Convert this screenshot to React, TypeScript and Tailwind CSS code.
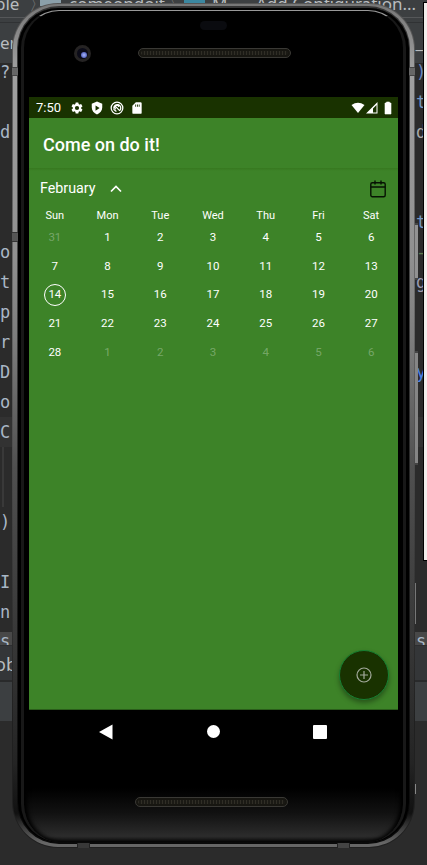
import type { ReactNode } from "react";

const weekdays = ["Sun", "Mon", "Tue", "Wed", "Thu", "Fri", "Sat"];
const days = [31, ...Array.from({ length: 28 }, (_, i) => i + 1), 1, 2, 3, 4, 5, 6];

const leftCode = ["?", "", "d", "", "", "", "o", "t", "p", "r", "D", "o", "C", "", "", ")", "", "I", "n"];
const rightCode: [string, string][] = [
  [")", "text-[#6a87c0]"], ["t", "text-[#7397c0]"], ["d", "text-[#a9a9a9]"], ["", ""], ["", ""],
  ["t", "text-[#7397c0]"], ["-", "text-[#5d7a50]"], ["g", "text-[#9a9ab0]"], ["", ""], ["", ""],
  ["y", "text-[#4a82e8]"],
];

function Editor() {
  return (
    <div className="flex h-[865px] w-[427px] flex-col overflow-hidden bg-[#2b2b2b] text-[#a9b7c6]">
      <div className="flex h-[18px] shrink-0 items-start border-b border-[#555759] bg-[#3c3f41] font-['Noto_Sans',sans-serif] text-[17px] leading-[7px] whitespace-pre text-[#b8bcbf]">
        <span className="w-[22px]"><span className="-ml-[5px]">ble</span></span>
        <span className="w-[18px] pl-[7px] text-[#777]">〉</span>
        <span className="h-[6px] w-[21px] bg-[#8b9fa9]" />
        <span className="w-[104px] pl-[8px]">comeondoit</span>
        <span className="w-[19px] pl-[3px] text-[#777]">〉</span>
        <span className="h-[6px] w-[21px] bg-[#3b87a0]" />
        <span className="w-[51px] pl-[7px]">M...</span>
        <span>Add Configuration...</span>
      </div>
      <div className="h-[5px] shrink-0 border-b border-[#303234] bg-[#3c3f41]" />
      <div className="flex h-[40px] shrink-0 items-center justify-between bg-[#3c3f41] font-['Noto_Sans',sans-serif] text-[17px] text-[#b8bcbf]">
        <span>er</span>
        <span className="pr-[4px]">_</span>
      </div>
      <div className="flex h-[582px] shrink-0 justify-between overflow-hidden bg-[#2b2b2b] font-['DejaVu_Sans_Mono',monospace] text-[17px] leading-[30px]">
        <div className="-mt-[6px] w-[13px]">
          {leftCode.map((c, i) => (
            <div key={i} className={i === 12 ? "h-[30px] bg-[#323232]" : "h-[30px]"}>
              {i === 13 || i === 14 ? <div className="ml-[2px] h-full w-[2px] bg-[#393939]" /> : c}
            </div>
          ))}
          <div className="mt-[5px] h-[13px] bg-[#484848] leading-[18px]">s</div>
        </div>
        <div className="-mt-[6px] flex w-[14px] flex-col">
          {rightCode.map(([c, color], i) => (
            <div key={i} className={`h-[30px] pl-[3px] ${color}`}>{c}</div>
          ))}
          <div className="h-[30px]" />
          <div className="h-[30px] bg-[#323232]" />
          <div className="mt-[185px] h-[13px] bg-[#484848] pl-[3px] leading-[18px]">s</div>
        </div>
      </div>
      <div className="h-[37px] shrink-0 border-t border-b-2 border-t-[#2d2e30] border-b-[#292a2b] bg-[#343638] font-['Noto_Sans',sans-serif] text-[18px] leading-[36px] text-[#b8bcbf]">
        <span className="-ml-[5px]">ob</span>
      </div>
      <div className="h-[39px] shrink-0 bg-[#3c3f41]" />
    </div>
  );
}

function StatusIcon({ children }: { children: ReactNode }) {
  return <svg viewBox="0 0 24 24" className="size-[14px]" fill="#fff">{children}</svg>;
}

function StatusBar() {
  return (
    <div className="flex h-[21px] shrink-0 items-center bg-[#193200] pr-[5px] pl-[7px] text-white">
      <span className="w-[34px] text-[13px] leading-[21px]">7:50</span>
      <div className="flex gap-[6px]">
        <StatusIcon>
          <path d="M19.14 12.94c.04-.3.06-.61.06-.94 0-.32-.02-.64-.07-.94l2.03-1.58a.49.49 0 0 0 .12-.61l-1.92-3.32a.49.49 0 0 0-.59-.22l-2.39.96a7 7 0 0 0-1.62-.94l-.36-2.54A.48.48 0 0 0 13.92 2.4h-3.84a.47.47 0 0 0-.47.41l-.36 2.54c-.59.24-1.13.57-1.62.94l-2.39-.96a.48.48 0 0 0-.59.22L2.74 8.87a.48.48 0 0 0 .12.61l2.03 1.58a7 7 0 0 0 0 1.88l-2.03 1.58a.49.49 0 0 0-.12.61l1.92 3.32c.12.22.37.29.59.22l2.39-.96c.5.38 1.03.7 1.62.94l.36 2.54c.05.24.24.41.48.41h3.84c.24 0 .44-.17.47-.41l.36-2.54a7 7 0 0 0 1.62-.94l2.39.96c.22.08.47 0 .59-.22l1.92-3.32a.47.47 0 0 0-.12-.61zM12 15.6a3.6 3.6 0 1 1 0-7.2 3.6 3.6 0 0 1 0 7.2z" />
        </StatusIcon>
        <StatusIcon>
          <path fillRule="evenodd" d="M12 1 3 4.5V11c0 5.5 3.8 10 9 12 5.200-2 9-6.500 9-12V4.500zM9.500 7.500l7 4.500-7 4.500z" />
        </StatusIcon>
        <StatusIcon>
          <g fill="none" stroke="#fff" strokeWidth="2.200">
            <circle cx="12" cy="12" r="10" />
            <path d="M6.500 13a6 6 0 1 1 10.500 3M8 8l9 9M10 14a3.500 3.500 0 1 1 5-4M6 14l5 4" />
          </g>
        </StatusIcon>
        <StatusIcon>
          <path fillRule="evenodd" d="M10 2h8a2 2 0 0 1 2 2v16a2 2 0 0 1-2 2H6a2 2 0 0 1-2-2V8zM9 6v4h1.500V6zm3 0v4h1.500V6zm3 0v4h1.500V6z" />
        </StatusIcon>
      </div>
      <svg viewBox="0 0 42 14" className="ml-auto h-[14px] w-[42px]" fill="#fff">
        <path d="M.5 4Q7-.5 13.500 4L7 12z" />
        <path fillRule="evenodd" d="M15 12.500 26.500 1v11.500zM22 11.500h3.500v-7.500L22 7.500z" />
        <path d="M34 2h1.500V1h3v1H40v11h-6z" stroke="#fff" strokeLinejoin="round" strokeWidth=".6" />
      </svg>
    </div>
  );
}

function Calendar() {
  return (
    <div className="mt-[2px] -ml-[0.5px] grid w-[369px] shrink-0 grid-cols-7 text-center text-white">
      {weekdays.map((d) => (
        <div key={d} className="h-[15.300px] text-[11px] leading-[16px]">{d}</div>
      ))}
      {days.map((d, i) => (
        <div key={i} className="flex h-[28.700px] items-center justify-center text-[11.500px]">
          <span
            className={
              i === 14
                ? "flex size-[22px] items-center justify-center rounded-full border border-white"
                : i === 0 || i > 28
                  ? "text-white/30"
                  : ""
            }
          >
            {d}
          </span>
        </div>
      ))}
    </div>
  );
}

function Screen() {
  return (
    <div className="flex h-[613px] w-[369px] shrink-0 flex-col border-b border-[#2b5d1b] bg-[#3d8328] font-[Roboto,sans-serif]">
      <StatusBar />
      <div className="flex h-[50px] shrink-0 items-center pl-[14px] text-[18px] font-medium text-white">
        <span className="pt-[2px]">Come on do it!</span>
      </div>
      <div className="h-[3px] shrink-0 bg-linear-to-b from-[#37781f] to-[#3d8328]" />
      <div className="flex h-[35px] shrink-0 items-center pr-[12px] pl-[11px] text-white">
        <span className="text-[14.300px] leading-[33px]">February</span>
        <svg viewBox="0 0 12 8" className="ml-[14px] h-[8px] w-[12px]" fill="none" stroke="#fff" strokeWidth="1.700">
          <path d="m1 6.500 5-5 5 5" />
        </svg>
        <svg viewBox="0 0 16 18" className="ml-auto h-[18px] w-[16px]" fill="none" stroke="#071203" strokeWidth="1.400">
          <rect x=".8" y="2.700" width="14.400" height="14" rx="1.500" />
          <path d="M.7 7h14.600M5 .5v4M11 .5v4" />
        </svg>
      </div>
      <Calendar />
      <div className="mt-auto mr-[9px] mb-[9px] flex size-[50px] shrink-0 items-center justify-center self-end rounded-full border border-[#168032] bg-[#193200] shadow-[0_3px_5px_rgba(0,0,0,0.35)]">
        <svg viewBox="0 0 16 16" className="size-[16px]" fill="none" stroke="#a3aa9b" strokeWidth="1.200">
          <circle cx="8" cy="8" r="7" />
          <path d="M4 8h8M8 4v8" />
        </svg>
      </div>
    </div>
  );
}

function Speaker() {
  return (
    <div className="h-[10px] w-[153px] rounded-full border border-[#3a3935] bg-[#171611] p-[2px]">
      <div className="h-full rounded-full bg-[repeating-linear-gradient(90deg,#302e26_0px,#302e26_1px,#1b1a15_1px,#1b1a15_3px)]" />
    </div>
  );
}

function Phone() {
  return (
    <div className="h-[845px] w-[403px] rounded-[46px] bg-linear-to-b from-[#555] via-[#6a6a6a] via-35% to-[#202020] to-85% p-px">
      <div className="h-full rounded-[45px] bg-[linear-gradient(180deg,#777_0%,#a0a0a0_8%,#909090_30%,#7c7c7c_40%,#505050_55%,#383838_75%,#242424_90%,#111_96%,#666_99.500%)] px-[4px] pt-[2px] pb-[3px]">
        <div className="h-full rounded-[42px] bg-[linear-gradient(180deg,#333_0%,#4d4d4d_25%,#222_60%,#090909_100%)] px-px py-[2px]">
          <div className="h-full rounded-[40px] border-x-[3px] border-black bg-black pt-[2px]">
            <div className="flex h-full flex-col rounded-[38px] border-x-[3px] border-t border-x-[#181818] border-t-[#999] bg-[linear-gradient(180deg,#000_0%,#000_93.500%,#111_96.500%,#2c2c2c_99.300%,#151515_100%)] shadow-[inset_3px_0_4px_#000,inset_-3px_0_4px_#000]">
              <div className="flex h-[86px] shrink-0 flex-col items-center">
                <div className="mt-[10px] h-[9px] w-[27px] rounded-full bg-[#0a0b0f]" />
                <div className="mt-[14px] flex w-full items-center">
                  <div className="mt-px ml-[50px] flex size-[17px] items-center justify-center rounded-full border-[3px] border-[#252323] bg-[#0b0b18]">
                    <div className="mt-[2px] ml-[2px] size-[6px] rounded-full bg-[radial-gradient(circle,#a9b7ff,#3442a3)]" />
                  </div>
                  <div className="-mt-px ml-[47px]"><Speaker /></div>
                </div>
              </div>
              <div className="ml-[5px]"><Screen /></div>
              <div className="flex h-[43px] shrink-0 items-center pl-[75px]">
                <svg viewBox="0 0 14 16" className="h-[16px] w-[14px]" fill="#fff"><path d="M0 8 13.500.5v15z" /></svg>
                <div className="ml-[94px] size-[13px] rounded-full bg-white" />
                <div className="ml-[93px] size-[14px] rounded-[1px] bg-white" />
              </div>
              <div className="mt-[44px] ml-[111px]"><Speaker /></div>
            </div>
          </div>
        </div>
      </div>
    </div>
  );
}

export default function App() {
  return (
    <div className="relative h-[865px] w-[427px] overflow-hidden bg-[#2b2b2b]">
      <Editor />
      <div className="absolute top-[2px] left-[423px] h-[559px] w-[10px] border border-black bg-[#f3eeec]" />
      <div className="absolute top-[223px] left-[414px] h-[57px] w-[4px] border-y-2 border-[#444] bg-[#929292]" />
      <div className="absolute top-[351px] left-[414px] h-[114px] w-[4px] border-y-2 border-[#444] bg-[#858585]" />
      <div className="absolute top-[583px] left-[415px] h-[41px] w-px bg-[#777]" />
      <div className="absolute top-[784px] left-[415px] h-[10px] w-px bg-[#888]" />
      <div className="absolute top-[3px] left-[12px]"><Phone /></div>
      <div className="absolute top-[67px] left-[12px] h-[9px] w-[6px] border-y border-[#444] bg-[#666]" />
      <div className="absolute top-[67px] left-[409px] h-[9px] w-[6px] border-y border-[#444] bg-[#666]" />
      <div className="absolute top-[232px] left-[12px] h-[10px] w-[6px] border-y border-[#333] bg-[#555]" />
      <div className="absolute top-[843px] left-[77px] h-[5px] w-[13px] border-x border-[#222] bg-[#383838]" />
      <div className="absolute top-[843px] left-[337px] h-[5px] w-[13px] border-x border-[#222] bg-[#444]" />
    </div>
  );
}
